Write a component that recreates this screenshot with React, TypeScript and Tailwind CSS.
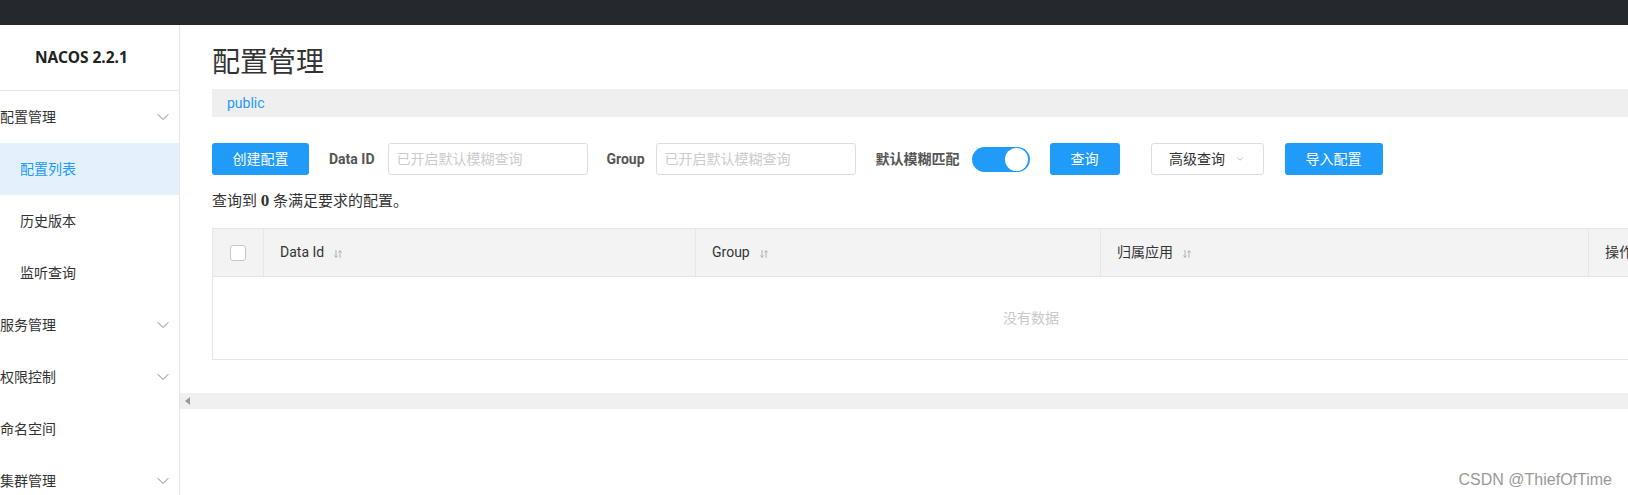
import { ChevronDown } from 'lucide-react'

const MENU = [
  { label: '配置管理', group: true, open: true },
  { label: '配置列表', sub: true, active: true },
  { label: '历史版本', sub: true },
  { label: '监听查询', sub: true },
  { label: '服务管理', group: true },
  { label: '权限控制', group: true },
  { label: '命名空间' },
  { label: '集群管理', group: true },
]

const COLUMNS = [
  { label: 'Data Id', width: 'w-[432px]', sort: true },
  { label: 'Group', width: 'w-[405px]', sort: true },
  { label: '归属应用', width: 'w-[488px]', sort: true },
  { label: '操作', width: 'flex-1', sort: false },
]

const font = "font-['Roboto','Noto_Sans_CJK_SC',sans-serif]"

function SortIcon() {
  return (
    <svg width="8" height="10" viewBox="0 0 8 10" className="ml-[10px] mt-[3px]">
      <path d="M2 1v7M0.5 6.5 2 8.5 3.5 6.5" stroke="#aaa" strokeWidth="0.9" fill="none" />
      <path d="M6 9V2M4.5 3.5 6 1.5 7.5 3.5" stroke="#aaa" strokeWidth="0.9" fill="none" />
    </svg>
  )
}

function Sidebar() {
  return (
    <aside className="w-[180px] shrink-0 border-r border-[#e6e6e6] bg-white">
      <div className="h-[66px] flex items-center pl-[35px] border-b border-[#e6e6e6] pt-[1px]">
        <span className="font-['Noto_Sans',sans-serif] font-bold text-[15.5px] text-[#222]">NACOS 2.2.1</span>
      </div>
      {MENU.map((m) => (
        <div
          key={m.label}
          className={`h-[52px] flex items-center justify-between text-[14px] ${m.sub ? 'pl-[20px]' : 'pl-0'} ${
            m.active ? 'bg-[#e4f1fc] text-[#209bfa]' : 'text-[#333]'
          }`}
        >
          <span>{m.label}</span>
          {m.group && <ChevronDown size={20} strokeWidth={1.1} className="mr-[6px] text-[#777]" />}
        </div>
      ))}
    </aside>
  )
}

function Toolbar() {
  return (
    <div className="flex items-center mt-[26px] h-[32px] text-[14px]">
      <button className="w-[97px] h-[32px] rounded-[3px] bg-[#209bfa] text-white">创建配置</button>
      <span className="ml-[20px] mr-[13px] font-bold text-[#555]">Data ID</span>
      <input
        placeholder="已开启默认模糊查询"
        className="w-[200px] h-[32px] rounded-[3px] border border-[#dcdee3] px-[8px] placeholder:text-[#ccc] outline-none"
      />
      <span className="ml-[19px] mr-[11px] font-bold text-[#555]">Group</span>
      <input
        placeholder="已开启默认模糊查询"
        className="w-[200px] h-[32px] rounded-[3px] border border-[#dcdee3] px-[8px] placeholder:text-[#ccc] outline-none"
      />
      <span className="ml-[20px] mr-[12px] font-bold text-[#555]">默认模糊匹配</span>
      <div className="w-[58px] h-[25px] rounded-full bg-[#209bfa] flex items-center justify-end pr-[2px]">
        <div className="w-[23px] h-[23px] rounded-full bg-white" />
      </div>
      <button className="ml-[20px] w-[70px] h-[32px] rounded-[3px] bg-[#209bfa] text-white">查询</button>
      <button className="ml-[31px] w-[113px] h-[32px] rounded-[3px] border border-[#dcdee3] bg-white text-[#333] flex items-center justify-center gap-[10px]">
        高级查询
        <ChevronDown size={10} strokeWidth={1.5} className="text-[#999]" />
      </button>
      <button className="ml-[21px] w-[98px] h-[32px] rounded-[3px] bg-[#209bfa] text-white">导入配置</button>
    </div>
  )
}

function Table() {
  return (
    <div className="mt-[17px] w-[1638px] border border-[#e6e6e6]">
      <div className="h-[48px] flex bg-[#f3f3f3] border-b border-[#e6e6e6] text-[14px] text-[#333]">
        <div className="w-[51px] flex items-center justify-center border-r border-[#e6e6e6]">
          <div className="w-[16px] h-[16px] rounded-[3px] border border-[#c4c6cf] bg-white" />
        </div>
        {COLUMNS.map((c, i) => (
          <div
            key={c.label}
            className={`${c.width} flex items-center pl-[16px] ${i < COLUMNS.length - 1 ? 'border-r border-[#e6e6e6]' : ''}`}
          >
            <span>{c.label}</span>
            {c.sort && <SortIcon />}
          </div>
        ))}
      </div>
      <div className="h-[82px] flex items-center justify-center text-[14px] text-[#c8c8c8]">没有数据</div>
    </div>
  )
}

export default function App() {
  return (
    <div className={`w-[1628px] h-[495px] overflow-hidden flex flex-col bg-white relative ${font}`}>
      <div className="h-[25px] shrink-0 bg-[#25292e]" />
      <div className="flex flex-1 min-h-0">
        <Sidebar />
        <main className="flex-1 min-w-0 overflow-hidden">
          <div className="pl-[32px]">
            <div className="h-[64px] flex items-center pt-[12px]">
              <h1 className="text-[28px] text-[#333] leading-none">配置管理</h1>
            </div>
            <div className="h-[28px] bg-[#efefef] flex items-center pl-[15px] text-[14px] text-[#209bfa]">public</div>
            <Toolbar />
            <div className="mt-[16px] h-[20px] flex items-center text-[15px] text-[#333]">
              查询到&nbsp;<b className="font-['Liberation_Serif',serif] text-[17px]">0</b>&nbsp;条满足要求的配置。
            </div>
            <Table />
          </div>
          <div className="mt-[33px] h-[16px] bg-[#f0f0f0] flex items-center pl-[5px]">
            <svg width="6" height="8" viewBox="0 0 6 8">
              <path d="M5 0 0 4 5 8Z" fill="#999" />
            </svg>
          </div>
        </main>
      </div>
      <span className="absolute right-[16px] bottom-[3px] text-[16px] text-[#999] font-['Liberation_Sans',sans-serif]">
        CSDN @ThiefOfTime
      </span>
    </div>
  )
}
